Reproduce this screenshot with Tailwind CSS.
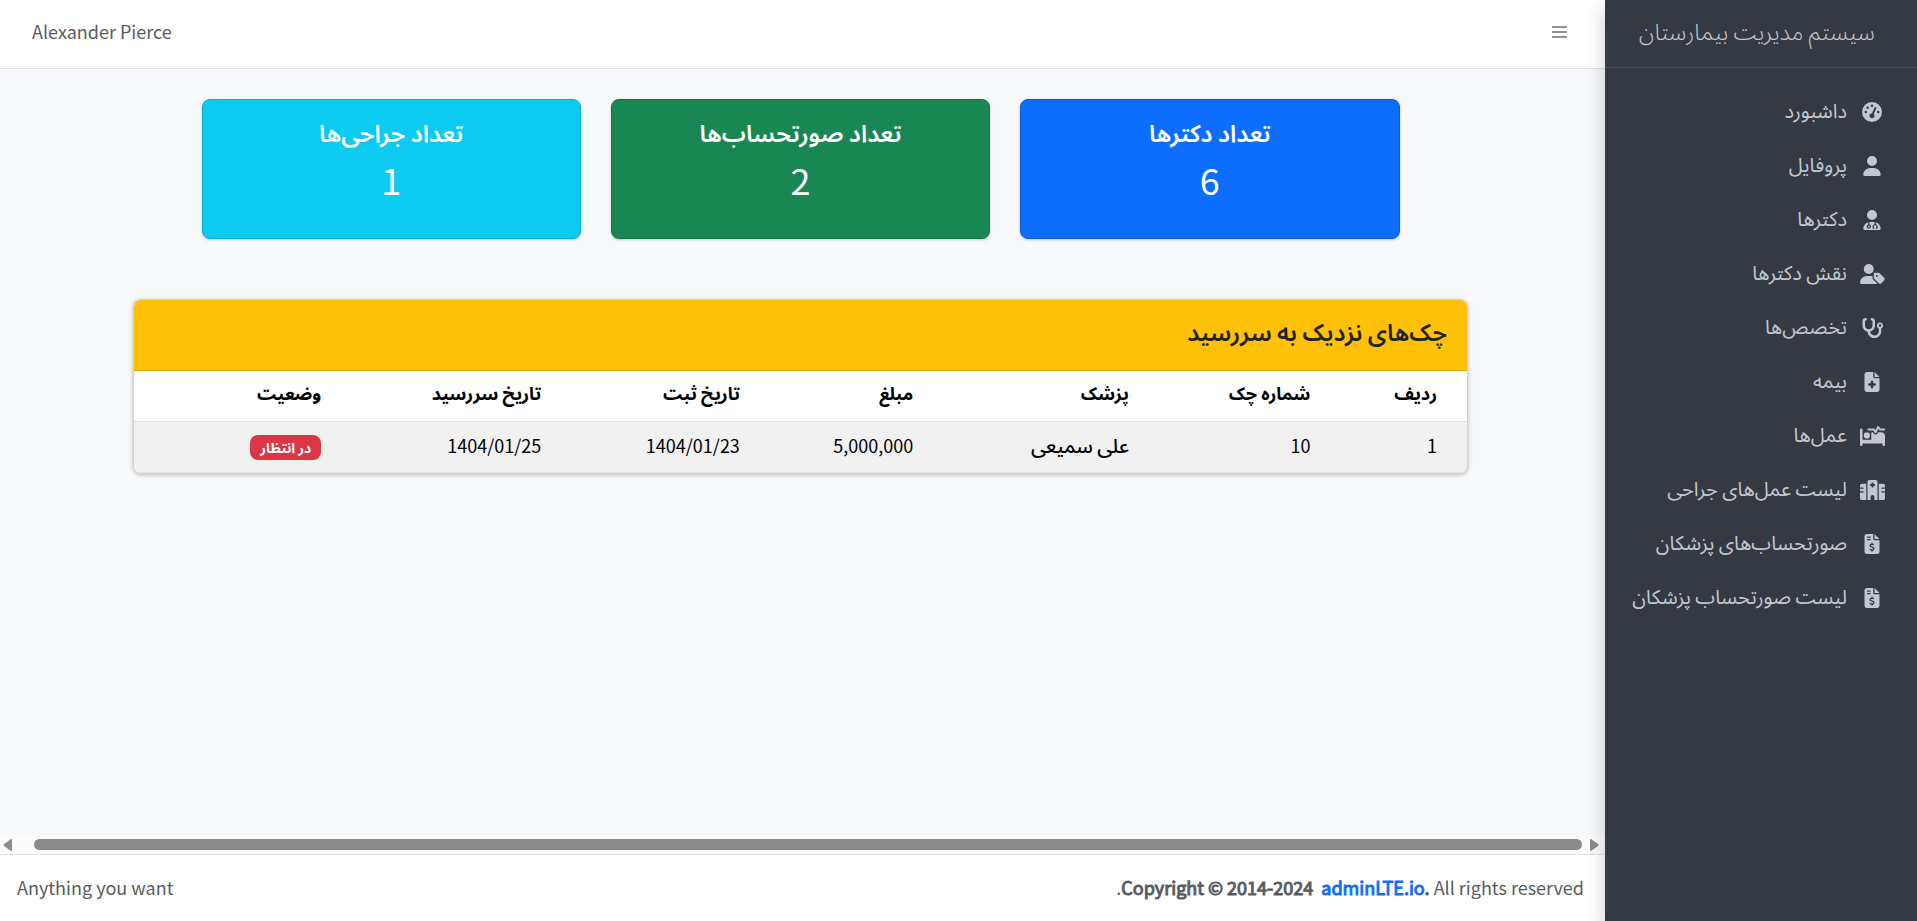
<!DOCTYPE html>
<html lang="fa" dir="rtl">
<head>
<meta charset="utf-8">
<meta name="viewport" content="width=device-width, initial-scale=1">
<title>سیستم مدیریت بیمارستان</title>
<script src="https://cdn.jsdelivr.net/npm/@tailwindcss/browser@4"></script>
</head>
<body class="font-['Noto_Sans_CJK_SC','Noto_Sans_Arabic','DejaVu_Sans',sans-serif] text-[18px] leading-[30px] text-[#212529] bg-[#f8f9fb]">
<div class="flex min-h-screen">
  <aside class="relative z-10 w-[312px] shrink-0 bg-[#353942] text-[20px] text-[#c2c7d0] shadow-[0_10px_20px_rgba(0,0,0,0.2)]">
    <div class="flex h-[68px] items-center border-b border-[#4b5059] px-[42px] pb-2">
      <a href="#" class="whitespace-nowrap text-[23px] font-light text-[#c6c7c9]">سیستم مدیریت بیمارستان</a>
    </div>
    <nav class="px-2.5 pt-[19px]">
      <ul class="flex flex-col gap-1">
        <li><a href="#" class="flex h-[50px] items-center gap-2.5 pr-5 whitespace-nowrap"><span class="flex w-[30px] shrink-0 justify-center"><svg class="h-5 w-5 fill-current" viewBox="0 0 512 512"><path d="M0 256a256 256 0 1 1 512 0A256 256 0 1 1 0 256zM288 96a32 32 0 1 0 -64 0 32 32 0 1 0 64 0zM256 416c35.3 0 64-28.7 64-64c0-17.4-6.9-33.1-18.1-44.6L366 161.7c5.3-12.1-.2-26.3-12.3-31.6s-26.3 .2-31.6 12.3L257.9 288c-.6 0-1.3 0-1.9 0c-35.3 0-64 28.7-64 64s28.7 64 64 64zM176 144a32 32 0 1 0 -64 0 32 32 0 1 0 64 0zM96 288a32 32 0 1 0 0-64 32 32 0 1 0 0 64zm352-32a32 32 0 1 0 -64 0 32 32 0 1 0 64 0z"/></svg></span><span class="pb-1">داشبورد</span></a></li>
        <li><a href="#" class="flex h-[50px] items-center gap-2.5 pr-5 whitespace-nowrap"><span class="flex w-[30px] shrink-0 justify-center"><svg class="h-5 w-[18px] fill-current" viewBox="0 0 448 512"><path d="M224 256A128 128 0 1 0 224 0a128 128 0 1 0 0 256zm-45.7 48C79.8 304 0 383.8 0 482.3C0 498.7 13.3 512 29.7 512l388.6 0c16.4 0 29.7-13.3 29.7-29.7C448 383.8 368.2 304 269.7 304l-91.4 0z"/></svg></span><span class="pb-1">پروفایل</span></a></li>
        <li><a href="#" class="flex h-[50px] items-center gap-2.5 pr-5 whitespace-nowrap"><span class="flex w-[30px] shrink-0 justify-center"><svg class="h-5 w-[18px] fill-current" viewBox="0 0 448 512"><path d="M224 256A128 128 0 1 0 224 0a128 128 0 1 0 0 256zm-96 55.2C54 332.9 0 401.3 0 482.3C0 498.7 13.3 512 29.7 512l388.6 0c16.4 0 29.7-13.3 29.7-29.7c0-81-54-149.4-128-171.1l0 50.8c27.6 7.1 48 32.2 48 62l0 40c0 8.8-7.2 16-16 16l-16 0c-8.8 0-16-7.2-16-16s7.2-16 16-16l0-24c0-17.7-14.3-32-32-32s-32 14.3-32 32l0 24c8.8 0 16 7.2 16 16s-7.2 16-16 16l-16 0c-8.8 0-16-7.2-16-16l0-40c0-29.8 20.4-54.9 48-62l0-57.1c-6-.6-12.1-.9-18.3-.9l-91.4 0c-6.2 0-12.3 .3-18.3 .9l0 65.4c23.1 6.9 40 28.3 40 53.7c0 30.9-25.1 56-56 56s-56-25.1-56-56c0-25.4 16.9-46.8 40-53.7l0-59.1zM144 448a24 24 0 1 0 0-48 24 24 0 1 0 0 48z"/></svg></span><span class="pb-1">دکترها</span></a></li>
        <li><a href="#" class="flex h-[50px] items-center gap-2.5 pr-5 whitespace-nowrap"><span class="flex w-[30px] shrink-0 justify-center"><svg class="h-5 w-[25px] fill-current" viewBox="0 0 640 512"><path d="M224 256A128 128 0 1 0 224 0a128 128 0 1 0 0 256zm-45.7 48C79.8 304 0 383.8 0 482.3C0 498.7 13.3 512 29.7 512l388.6 0c10 0 18.8-4.9 24.2-12.5l-99.2-99.2c-14.9-14.9-23.3-35.1-23.3-56.1l0-33c-15.9-4.7-32.8-7.2-50.3-7.2l-91.4 0zM384 224c-17.7 0-32 14.3-32 32l0 82.7c0 17 6.7 33.3 18.7 45.3L478.1 491.3c18.7 18.7 49.1 18.7 67.9 0l73.4-73.4c18.7-18.7 18.7-49.1 0-67.9L512 242.7c-12-12-28.3-18.7-45.3-18.7L384 224zm24 80a24 24 0 1 1 48 0 24 24 0 1 1 -48 0z"/></svg></span><span class="pb-1">نقش دکترها</span></a></li>
        <li><a href="#" class="flex h-[50px] items-center gap-2.5 pr-5 whitespace-nowrap"><span class="flex w-[30px] shrink-0 justify-center"><svg class="h-5 w-[23px] fill-current" viewBox="0 0 576 512"><path d="M142.4 21.9c5.6 16.8-3.5 34.9-20.2 40.5L96 71.1V192c0 53 43 96 96 96s96-43 96-96V71.1l-26.1-8.7c-16.8-5.6-25.8-23.7-20.2-40.5s23.7-25.8 40.5-20.2l26.1 8.7C334.4 19.1 352 43.5 352 71.1V192c0 77.2-54.6 141.6-127.3 156.7C231 404.6 278.4 448 336 448c61.9 0 112-50.1 112-112V265.3c-28.3-12.3-48-40.5-48-73.3c0-44.2 35.8-80 80-80s80 35.8 80 80c0 32.8-19.7 61-48 73.3V336c0 97.2-78.8 176-176 176c-92.9 0-168.9-71.9-175.5-163.1C87.2 334.2 32 269.6 32 192V71.1c0-27.5 17.6-52 43.8-60.7l26.1-8.7c16.8-5.6 34.9 3.5 40.5 20.2zM480 224a32 32 0 1 0 0-64 32 32 0 1 0 0 64z"/></svg></span><span class="pb-1">تخصص‌ها</span></a></li>
        <li><a href="#" class="flex h-[50px] items-center gap-2.5 pr-5 whitespace-nowrap"><span class="flex w-[30px] shrink-0 justify-center"><svg class="h-5 w-4 fill-current" viewBox="0 0 384 512"><path d="M64 0C28.7 0 0 28.7 0 64V448c0 35.3 28.7 64 64 64H320c35.3 0 64-28.7 64-64V160H256c-17.7 0-32-14.3-32-32V0H64zM256 0V128H384L256 0zM160 240c0-8.8 7.2-16 16-16h32c8.8 0 16 7.2 16 16v48h48c8.8 0 16 7.2 16 16v32c0 8.8-7.2 16-16 16H224v48c0 8.8-7.2 16-16 16H176c-8.8 0-16-7.2-16-16V352H112c-8.8 0-16-7.2-16-16V304c0-8.8 7.2-16 16-16h48V240z"/></svg></span><span class="pb-1">بیمه</span></a></li>
        <li><a href="#" class="flex h-[50px] items-center gap-2.5 pr-5 whitespace-nowrap"><span class="flex w-[30px] shrink-0 justify-center"><svg class="h-5 w-[25px] fill-current" viewBox="0 0 640 512"><path d="M483.2 9.6L524 64h92c13.3 0 24 10.7 24 24s-10.7 24-24 24H512c-7.6 0-14.7-3.6-19.2-9.6L468.7 70.3l-47 99.9c-3.7 7.8-11.3 13.1-19.9 13.7s-16.9-3.4-21.7-10.6L339.2 112H216c-13.3 0-24-10.7-24-24s10.7-24 24-24H352c8 0 15.5 4 20 10.7l24.4 36.6 45.9-97.5C445.9 6.2 453.2 1 461.6 .1s16.6 2.7 21.6 9.5zM320 160h12.7l20.7 31.1c11.2 16.8 30.6 26.3 50.7 24.8s37.9-13.7 46.5-32L461.9 160H544c53 0 96 43 96 96V480c0 17.7-14.3 32-32 32s-32-14.3-32-32V448H352 320 64v32c0 17.7-14.3 32-32 32s-32-14.3-32-32V96C0 78.3 14.3 64 32 64s32 14.3 32 32V352H288V192c0-17.7 14.3-32 32-32zm-144 0a80 80 0 1 1 0 160 80 80 0 1 1 0-160z"/></svg></span><span class="pb-1">عمل‌ها</span></a></li>
        <li><a href="#" class="flex h-[50px] items-center gap-2.5 pr-5 whitespace-nowrap"><span class="flex w-[30px] shrink-0 justify-center"><svg class="h-5 w-[25px] fill-current" viewBox="0 0 640 512"><path d="M192 48c0-26.5 21.5-48 48-48H400c26.5 0 48 21.5 48 48V512H368V432c0-26.5-21.5-48-48-48s-48 21.5-48 48v80H192V48zM48 96H160V512H48c-26.5 0-48-21.5-48-48V320H80c8.8 0 16-7.2 16-16s-7.2-16-16-16H0V224H80c8.8 0 16-7.2 16-16s-7.2-16-16-16H0V144c0-26.5 21.5-48 48-48zm544 0c26.5 0 48 21.5 48 48v48H560c-8.8 0-16 7.2-16 16s7.2 16 16 16h80v64H560c-8.8 0-16 7.2-16 16s7.2 16 16 16h80V464c0 26.5-21.5 48-48 48H480V96H592zM312 64c-8.8 0-16 7.2-16 16v24H272c-8.8 0-16 7.2-16 16v16c0 8.8 7.2 16 16 16h24v24c0 8.8 7.2 16 16 16h16c8.8 0 16-7.2 16-16V152h24c8.8 0 16-7.2 16-16V120c0-8.8-7.2-16-16-16H344V80c0-8.8-7.2-16-16-16H312z"/></svg></span><span class="pb-1">لیست عمل‌های جراحی</span></a></li>
        <li><a href="#" class="flex h-[50px] items-center gap-2.5 pr-5 whitespace-nowrap"><span class="flex w-[30px] shrink-0 justify-center"><svg class="h-5 w-4 fill-current" viewBox="0 0 384 512"><path id="invoice" d="M64 0C28.7 0 0 28.7 0 64V448c0 35.3 28.7 64 64 64H320c35.3 0 64-28.7 64-64V160H256c-17.7 0-32-14.3-32-32V0H64zM256 0V128H384L256 0zM64 80c0-8.8 7.2-16 16-16h64c8.8 0 16 7.2 16 16s-7.2 16-16 16H80c-8.8 0-16-7.2-16-16zm0 64c0-8.8 7.2-16 16-16h64c8.8 0 16 7.2 16 16s-7.2 16-16 16H80c-8.8 0-16-7.2-16-16zm128 72c8.8 0 16 7.2 16 16v17.3c8.5 1.2 16.7 3.1 24.1 5.1c8.5 2.3 13.6 11 11.3 19.6s-11 13.6-19.6 11.3c-11.1-3-22-5.2-32.1-5.3c-8.4-.1-17.4 1.8-23.6 5.5c-5.7 3.4-8.1 7.3-8.1 12.8c0 3.7 1.3 6.5 7.3 10.1c6.9 4.1 16.6 7.1 29.2 10.9l.5 .1c11.3 3.4 25.3 7.6 36.3 14.6c12.1 7.6 22.4 19.7 22.7 38.2c.3 19.3-9.6 33.3-22.9 41.6c-7.7 4.8-16.4 7.6-25.1 9.1V440c0 8.8-7.2 16-16 16s-16-7.2-16-16V422.2c-11.2-2.1-21.7-5.7-30.9-8.9c-2.1-.7-4.2-1.4-6.2-2.1c-8.4-2.8-12.9-11.9-10.1-20.2s11.9-12.9 20.2-10.1c2.5 .8 4.8 1.6 7.1 2.4c13.6 4.6 24.6 8.4 36.3 8.7c9.1 .3 17.9-1.7 23.7-5.3c5.1-3.2 7.9-7.3 7.8-14c-.1-4.6-1.8-7.8-7.7-11.6c-6.8-4.3-16.5-7.4-29-11.2l-1.6-.5c-11-3.3-24.3-7.3-34.8-13.7c-12-7.2-22.6-18.9-22.7-37.3c-.1-19.4 10.8-32.8 23.8-40.5c7.5-4.4 15.8-7.2 24.1-8.7V232c0-8.8 7.2-16 16-16z"/></svg></span><span class="pb-1">صورتحساب‌های پزشکان</span></a></li>
        <li><a href="#" class="flex h-[50px] items-center gap-2.5 pr-5 whitespace-nowrap"><span class="flex w-[30px] shrink-0 justify-center"><svg class="h-5 w-4 fill-current" viewBox="0 0 384 512"><use href="#invoice"/></svg></span><span class="pb-1">لیست صورتحساب پزشکان</span></a></li>
      </ul>
    </nav>
  </aside>

  <div class="flex min-w-0 flex-1 flex-col">
    <header class="flex h-[69px] items-center justify-between border-b border-[#dee2e6] bg-white px-8 pb-1 text-[#595c5f]">
      <button type="button" aria-label="منو" class="flex h-10 w-[27px] flex-col items-center justify-center gap-[3px]">
        <span class="h-0.5 w-[15px] bg-[#949494]"></span>
        <span class="h-0.5 w-[15px] bg-[#949494]"></span>
        <span class="h-0.5 w-[15px] bg-[#949494]"></span>
      </button>
      <a href="#" dir="ltr" class="pb-0.5">Alexander Pierce</a>
    </header>

    <main class="flex-1 pt-[30px] pr-1">
      <section class="mx-auto grid max-w-[1198px] grid-cols-3 gap-[30px] text-center text-white">
        <div class="h-[140px] rounded-lg border border-[#0b5ed7] bg-[#0d6efd] pt-[17px] shadow-[0_1px_3px_rgba(0,0,0,0.2)]">
          <h2 class="text-[24px] font-semibold leading-[30px]">تعداد دکترها</h2>
          <p class="mt-2 text-[36px] leading-12">6</p>
        </div>
        <div class="h-[140px] rounded-lg border border-[#157347] bg-[#198754] pt-[17px] shadow-[0_1px_3px_rgba(0,0,0,0.2)]">
          <h2 class="text-[24px] font-semibold leading-[30px]">تعداد صورتحساب‌ها</h2>
          <p class="mt-2 text-[36px] leading-12">2</p>
        </div>
        <div class="h-[140px] rounded-lg border border-[#0bacce] bg-[#0dcaf0] pt-[17px] shadow-[0_1px_3px_rgba(0,0,0,0.2)]">
          <h2 class="text-[24px] font-semibold leading-[30px]">تعداد جراحی‌ها</h2>
          <p class="mt-2 text-[36px] leading-12">1</p>
        </div>
      </section>

      <section class="mx-auto mt-[60px] max-w-[1335px] overflow-hidden rounded-lg border border-[#d0d2d5] bg-white shadow-[0_1px_4px_rgba(0,0,0,0.25)]">
        <h2 class="flex h-[71px] items-center border-b border-[#d9a406] bg-[#ffc107] px-5 pb-2 text-[24px] font-semibold">چک‌های نزدیک به سررسید</h2>
        <table class="w-full table-fixed text-right text-black">
          <colgroup>
            <col class="w-[11%]"><col class="w-[13.6%]"><col class="w-[16.2%]"><col class="w-[13%]"><col class="w-[14.9%]"><col class="w-[16.5%]"><col class="w-[14.8%]">
          </colgroup>
          <thead>
            <tr class="border-b border-[#dee2e6]">
              <th class="px-2.5 pt-1.5 pb-3.5 pr-[30px]">ردیف</th><th class="px-2.5 pt-1.5 pb-3.5">شماره چک</th><th class="px-2.5 pt-1.5 pb-3.5">پزشک</th><th class="px-2.5 pt-1.5 pb-3.5">مبلغ</th><th class="px-2.5 pt-1.5 pb-3.5">تاریخ ثبت</th><th class="px-2.5 pt-1.5 pb-3.5">تاریخ سررسید</th><th class="px-2.5 pt-1.5 pb-3.5">وضعیت</th>
            </tr>
          </thead>
          <tbody>
            <tr class="border-b border-[#dee2e6] bg-[#f1f1f1]">
              <td class="px-2.5 pt-2 pb-3 pr-[30px]">1</td><td class="px-2.5 pt-2 pb-3">10</td><td class="px-2.5 pt-2 pb-3 text-[20px] font-medium">علی سمیعی</td><td class="px-2.5 pt-2 pb-3">5,000,000</td><td class="px-2.5 pt-2 pb-3">1404/01/23</td><td class="px-2.5 pt-2 pb-3">1404/01/25</td>
              <td class="px-2.5 pt-2 pb-3"><span class="inline-block rounded-lg bg-[#dc3545] px-2.5 text-[14px] font-bold leading-[25px] text-white">در انتظار</span></td>
            </tr>
          </tbody>
        </table>
      </section>
    </main>

    <div dir="ltr" class="flex h-[19px] items-center justify-between bg-[#fcfcfc] px-[3px]" aria-hidden="true">
      <svg class="h-3 w-[9px] fill-[#8b8b8b]" viewBox="0 0 9 12"><path d="M9 1v10q0 1-1 1L1 7Q0 6 1 5L8 0q1 0 1 1z"/></svg>
      <div class="mr-2 ml-[22px] h-[11px] flex-1 rounded-full bg-[#8b8b8b]"></div>
      <svg class="mr-[3px] h-3 w-[9px] fill-[#8b8b8b]" viewBox="0 0 9 12"><path d="M0 1v10q0 1 1 1L8 7q1-1 0-2L1 0Q0 0 0 1z"/></svg>
    </div>
    <footer class="flex h-[67px] items-center justify-between border-t border-[#dee2e6] bg-white pr-[21px] pb-0.5 pl-[17px] text-[#595c5f]">
      <p dir="ltr">.<strong class="font-normal [-webkit-text-stroke:1px]">Copyright © 2014-2024&nbsp; <a href="#" class="text-[#0d6efd]">adminLTE.io</a>.</strong> All rights reserved</p>
      <p>Anything you want</p>
    </footer>
  </div>
</div>
</body>
</html>
